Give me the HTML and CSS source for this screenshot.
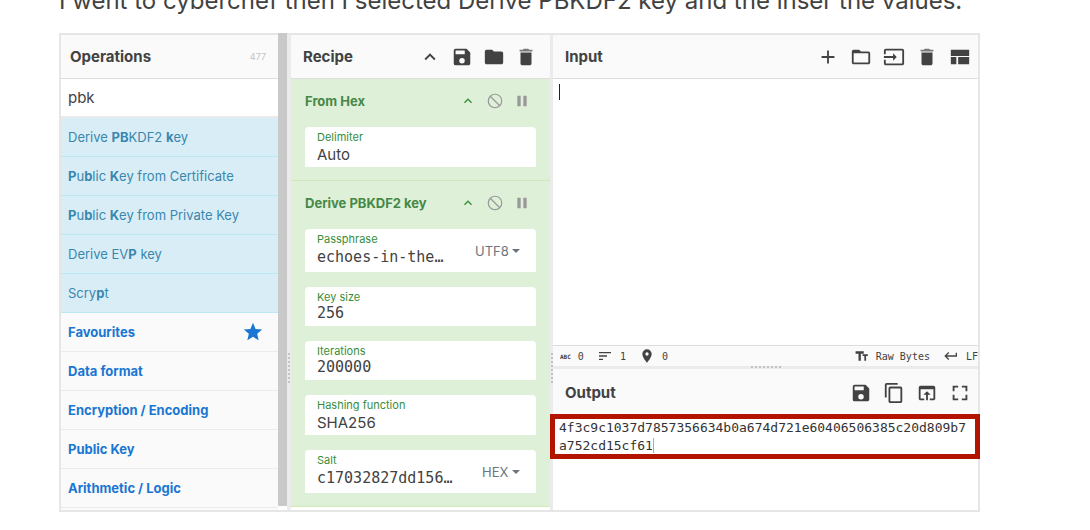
FILE: index.html
```
<!DOCTYPE html>
<html lang="en">
<head>
    <meta charset="utf-8">
    <title>CyberChef walkthrough</title>
    <link rel="stylesheet" href="styles.css">
</head>
<body>
    <p class="intro">I went to cyberchef then I selected Derive PBKDF2 key and the inser the values.</p>

    <main class="app">
        <!-- Operations -->
        <section class="operations">
            <div class="ops-body">
                <header class="title-bar">
                    <h2>Operations</h2>
                    <span class="count">477</span>
                </header>
                <input class="search" type="text" value="pbk" aria-label="Search operations">
                <ul class="results">
                    <li>Derive <b>PB</b>KDF2 <b>k</b>ey</li>
                    <li><b>P</b>u<b>b</b>lic <b>K</b>ey from Certificate</li>
                    <li><b>P</b>u<b>b</b>lic <b>K</b>ey from Private Key</li>
                    <li>Derive EV<b>P</b> key</li>
                    <li>Scry<b>p</b>t</li>
                </ul>
                <nav class="categories">
                    <a href="#favourites">Favourites
                        <svg width="22" height="22" viewBox="0 0 24 24"><path d="M12 17.27 18.18 21l-1.64-7.03L22 9.24l-7.19-.61L12 2 9.19 8.63 2 9.24l5.46 4.73L5.82 21z"/></svg>
                    </a>
                    <a href="#data">Data format</a>
                    <a href="#encryption">Encryption / Encoding</a>
                    <a href="#publickey">Public Key</a>
                    <a href="#arithmetic">Arithmetic / Logic</a>
                </nav>
            </div>
            <div class="scrollbar"></div>
        </section>

        <div class="gutter"><span class="grip"></span></div>

        <!-- Recipe -->
        <section class="recipe">
            <header class="title-bar">
                <h2>Recipe</h2>
                <div class="icons">
                    <button type="button" aria-label="Hide arguments"><svg class="icon" viewBox="0 0 24 24"><path d="M12 8l-6 6 1.41 1.41L12 10.83l4.59 4.58L18 14z"/></svg></button>
                    <button type="button" aria-label="Save recipe"><svg class="icon" viewBox="0 0 24 24"><path d="M17 3H5a2 2 0 0 0-2 2v14a2 2 0 0 0 2 2h14c1.100 0 2-.9 2-2V7zm-5 16a3 3 0 1 1 0-6 3 3 0 0 1 0 6zm3-10H5V5h10z"/></svg></button>
                    <button type="button" aria-label="Load recipe"><svg class="icon" viewBox="0 0 24 24"><path d="M10 4H4c-1.100 0-2 .9-2 2v12c0 1.100.9 2 2 2h16c1.100 0 2-.9 2-2V8c0-1.100-.9-2-2-2h-8z"/></svg></button>
                    <button type="button" aria-label="Clear recipe"><svg class="icon" viewBox="0 0 24 24"><path d="M6 19c0 1.100.9 2 2 2h8c1.100 0 2-.9 2-2V7H6z"/><path opacity=".7" d="M19 4h-3.500l-1-1h-5l-1 1H5v2h14z"/></svg></button>
                </div>
            </header>

            <article class="operation">
                <div class="op-title">
                    <h3>From Hex</h3>
                    <div class="op-icons">
                        <button type="button" class="collapse" aria-label="Collapse"><svg viewBox="0 0 24 24"><path d="M12 8l-6 6 1.41 1.41L12 10.83l4.59 4.58L18 14z"/></svg></button>
                        <button type="button" aria-label="Disable"><svg viewBox="0 0 24 24"><path d="M12 1a11 11 0 1 0 0 22 11 11 0 0 0 0-22zM3 12A9 9 0 0 1 5 6.300L17.700 19A9 9 0 0 1 3 12zm16 5.700L6.300 5A9 9 0 0 1 19 17.700z"/></svg></button>
                        <button type="button" aria-label="Breakpoint"><svg viewBox="0 0 24 24"><path d="M5 4h5v16H5zM14 4h5v16h-5z"/></svg></button>
                    </div>
                </div>
                <div class="field">
                    <div class="value">
                        <label for="delimiter">Delimiter</label>
                        <select id="delimiter"><option>Auto</option></select>
                    </div>
                </div>
            </article>

            <article class="operation">
                <div class="op-title">
                    <h3>Derive PBKDF2 key</h3>
                    <div class="op-icons">
                        <button type="button" class="collapse" aria-label="Collapse"><svg viewBox="0 0 24 24"><path d="M12 8l-6 6 1.41 1.41L12 10.83l4.59 4.58L18 14z"/></svg></button>
                        <button type="button" aria-label="Disable"><svg viewBox="0 0 24 24"><path d="M12 1a11 11 0 1 0 0 22 11 11 0 0 0 0-22zM3 12A9 9 0 0 1 5 6.300L17.700 19A9 9 0 0 1 3 12zm16 5.700L6.300 5A9 9 0 0 1 19 17.700z"/></svg></button>
                        <button type="button" aria-label="Breakpoint"><svg viewBox="0 0 24 24"><path d="M5 4h5v16H5zM14 4h5v16h-5z"/></svg></button>
                    </div>
                </div>
                <div class="field tall">
                    <div class="value">
                        <label for="passphrase">Passphrase</label>
                        <input id="passphrase" type="text" value="echoes-in-the…">
                    </div>
                    <div class="toggle">
                        <select aria-label="Passphrase format"><option>UTF8</option></select>
                        <svg width="8" height="4" viewBox="0 0 8 4"><path d="M0 0h8L4 4z"/></svg>
                    </div>
                </div>
                <div class="field short">
                    <div class="value">
                        <label for="keysize">Key size</label>
                        <input id="keysize" type="text" value="256">
                    </div>
                </div>
                <div class="field short">
                    <div class="value">
                        <label for="iterations">Iterations</label>
                        <input id="iterations" type="text" value="200000">
                    </div>
                </div>
                <div class="field">
                    <div class="value">
                        <label for="hash">Hashing function</label>
                        <select id="hash"><option>SHA256</option></select>
                    </div>
                </div>
                <div class="field tall">
                    <div class="value">
                        <label for="salt">Salt</label>
                        <input id="salt" type="text" value="c17032827dd156…">
                    </div>
                    <div class="toggle">
                        <select aria-label="Salt format"><option>HEX</option></select>
                        <svg width="8" height="4" viewBox="0 0 8 4"><path d="M0 0h8L4 4z"/></svg>
                    </div>
                </div>
            </article>
        </section>

        <div class="gutter"><span class="grip"></span></div>

        <!-- Input and output -->
        <section class="io">
            <header class="title-bar">
                <h2>Input</h2>
                <div class="icons">
                    <button type="button" aria-label="Add tab"><svg class="icon" viewBox="0 0 24 24"><path d="M19 13h-6v6h-2v-6H5v-2h6V5h2v6h6z"/></svg></button>
                    <button type="button" aria-label="Open folder"><svg class="icon" viewBox="0 0 24 24"><path d="M20 6h-8l-2-2H4c-1.100 0-2 .9-2 2v12c0 1.100.9 2 2 2h16c1.100 0 2-.9 2-2V8c0-1.100-.9-2-2-2zm0 12H4V8h16z"/></svg></button>
                    <button type="button" aria-label="Open file"><svg class="icon" viewBox="0 0 24 24"><path d="M21 3H3a2 2 0 0 0-2 2v4h2V5h18v14H3v-4H1v4c0 1.100.9 2 2 2h18c1.100 0 2-.9 2-2V5a2 2 0 0 0-2-2zM11 16l4-4-4-4v3H1v2h10z"/></svg></button>
                    <button type="button" aria-label="Clear input"><svg class="icon" viewBox="0 0 24 24"><path d="M6 19c0 1.100.9 2 2 2h8c1.100 0 2-.9 2-2V7H6z"/><path opacity=".7" d="M19 4h-3.500l-1-1h-5l-1 1H5v2h14z"/></svg></button>
                    <button type="button" aria-label="Reset layout"><svg class="icon" viewBox="0 0 24 24"><path d="M2 4h20v7H2zM2 12h6v8H2zM10 12h12v8H10z"/></svg></button>
                </div>
            </header>
            <div class="editor">
                <textarea aria-label="Input"></textarea>
                <span class="caret"></span>
            </div>
            <footer class="status">
                <span class="abc">ABC</span><span>0</span>
                <svg width="16" height="16" viewBox="0 0 24 24"><path d="M3 18h6v-2H3zM3 6v2h18V6zm0 7h12v-2H3z"/></svg><span>1</span>
                <svg width="16" height="16" viewBox="0 0 24 24"><path d="M12 2a7 7 0 0 0-7 7c0 5.250 7 13 7 13s7-7.750 7-13a7 7 0 0 0-7-7zm0 9.500a2.500 2.500 0 1 1 0-5 2.500 2.500 0 0 1 0 5z"/></svg><span>0</span>
                <div class="status-right">
                    <svg width="14" height="14" viewBox="0 0 24 24"><path d="M1 4v4h5v12h4V8h5V4zM22 9h-9v3h3v8h3v-8h3z"/></svg>
                    <span>Raw Bytes</span>
                    <svg width="16" height="16" viewBox="0 0 24 24"><path d="M19 7v4H5.830l3.580-3.590L8 6l-6 6 6 6 1.410-1.410L5.830 13H21V7z"/></svg>
                    <span>LF</span>
                </div>
            </footer>
            <div class="row-gutter"><span class="row-grip"></span></div>
            <header class="title-bar">
                <h2>Output</h2>
                <div class="icons">
                    <button type="button" aria-label="Save output"><svg class="icon" viewBox="0 0 24 24"><path d="M17 3H5a2 2 0 0 0-2 2v14a2 2 0 0 0 2 2h14c1.100 0 2-.9 2-2V7zm-5 16a3 3 0 1 1 0-6 3 3 0 0 1 0 6zm3-10H5V5h10z"/></svg></button>
                    <button type="button" aria-label="Copy output"><svg class="icon" viewBox="0 0 24 24"><path d="M16 1H4a2 2 0 0 0-2 2v14h2V3h12zm3 4H8a2 2 0 0 0-2 2v14c0 1.100.9 2 2 2h11c1.100 0 2-.9 2-2V7a2 2 0 0 0-2-2zm0 16H8V7h11z"/></svg></button>
                    <button type="button" aria-label="Move output to input"><svg class="icon" viewBox="0 0 24 24"><path d="M19 4H5a2 2 0 0 0-2 2v12c0 1.100.9 2 2 2h4v-2H5V8h14v10h-4v2h4c1.100 0 2-.9 2-2V6a2 2 0 0 0-2-2zm-7 6l-4 4h3v6h2v-6h3z"/></svg></button>
                    <button type="button" aria-label="Maximise output"><svg class="icon" viewBox="0 0 24 24"><path d="M6 14H4v6h6v-2H6zM4 10h2V6h4V4H4zm14 8h-4v2h6v-6h-2zM14 4v2h4v4h2V4z"/></svg></button>
                </div>
            </header>
            <div class="result">
                <output>4f3c9c1037d7857356634b0a674d721e60406506385c20d809b7a752cd15cf61<span class="end"></span></output>
                <div class="highlight"></div>
            </div>
        </section>
    </main>
</body>
</html>
```
FILE: styles.css
```
* {
    box-sizing: border-box;
}

body {
    margin: 0;
    background: #fff;
    color: #424242;
    font-family: Inter, "Liberation Sans", sans-serif;
    font-size: 13px;
}

h2, h3, ul {
    margin: 0;
    padding: 0;
}

.intro {
    margin: -14px 0 17px 59px;
    font-size: 24px;
    line-height: 30px;
    white-space: nowrap;
}

.app {
    display: grid;
    grid-template-columns: 226fr 4px 259fr 3px 425fr;
    margin: 0 110px 0 59px;
    border: 2px solid #e6e6e6;
}

.title-bar {
    display: flex;
    align-items: center;
    justify-content: space-between;
    height: 44px;
    padding: 0 13px 0 12px;
    background: #fafafa;
    border-bottom: 1px solid #ddd;
}

.title-bar h2 {
    font-size: 15px;
    font-weight: 700;
}

button {
    display: flex;
    padding: 0;
    border: 0;
    background: none;
    color: inherit;
}

svg {
    flex: none;
    fill: currentColor;
}

.icon {
    width: 22px;
    height: 22px;
}

.icons {
    display: flex;
    gap: 10px;
}

/* Operations */
.operations {
    display: flex;
}

.ops-body {
    flex: 1;
    background: #fafafa;
}

.ops-body .title-bar {
    padding: 0 12px 0 9px;
}

.count {
    color: #c4c4c4;
    font-size: 9px;
}

.search {
    display: block;
    width: 100%;
    height: 39px;
    padding: 0 7px;
    border: 0;
    border-bottom: 2px solid #eaeaea;
    background: #fff;
    color: #424242;
    font: 15px Inter, sans-serif;
}

.results {
    list-style: none;
}

.results li {
    height: 39px;
    padding: 0 7px;
    border-bottom: 1px solid #bce8f1;
    background: #d9edf7;
    color: #3a87ad;
    line-height: 38px;
}

.categories a {
    display: flex;
    align-items: center;
    justify-content: space-between;
    height: 39px;
    padding: 0 14px 0 7px;
    border-bottom: 1px solid #ebebeb;
    color: #1976d2;
    font-weight: 700;
    text-decoration: none;
}

.scrollbar {
    width: 9px;
    margin: -2px 0 4px;
    background: #c9c9c9;
}

.gutter {
    display: flex;
    justify-content: center;
    background: #ebebeb;
}

.grip {
    height: 30px;
    margin-top: 318px;
    border-left: 2px dotted #c4c4c4;
}

/* Recipe */
.recipe {
    padding-bottom: 3px;
}

.operation {
    padding: 0 14px 13px;
    border-bottom: 1px solid #d0e9b8;
    background: #dff0d8;
    color: #468847;
}

.op-title {
    display: flex;
    align-items: center;
    justify-content: space-between;
    height: 48px;
    padding: 0 6px 4px 0;
}

.op-title h3 {
    font-size: 13px;
    font-weight: 700;
}

.op-icons {
    display: flex;
    gap: 11px;
    color: #999;
}

.op-icons svg {
    width: 16px;
    height: 16px;
}

.op-icons .collapse {
    color: #388e3c;
}

.field {
    display: flex;
    justify-content: space-between;
    height: 40px;
    padding: 3px 12px 0;
    border-radius: 4px 4px 0 0;
    background: #fff;
}

.field + .field {
    margin-top: 15px;
}

.field.tall {
    height: 43px;
}

.field.short {
    height: 39px;
}

.value {
    display: flex;
    flex: 1;
    flex-direction: column;
    min-width: 0;
}

.value label {
    color: #388e3c;
    font-size: 11px;
    line-height: 14px;
}

.value input,
.value select {
    width: 100%;
    height: 18px;
    padding: 0;
    border: 0;
    background: none;
    color: #424242;
    font: 15px "DejaVu Sans Mono", monospace;
    appearance: none;
}

.value select {
    height: 20px;
    font-family: Inter, sans-serif;
}

.tall .value input {
    height: 22px;
}

.toggle {
    display: flex;
    align-items: center;
    gap: 3px;
    padding: 0 4px 3px 0;
    color: #6c757d;
}

.toggle select {
    padding: 0;
    border: 0;
    background: none;
    color: inherit;
    font: 13px Inter, sans-serif;
    appearance: none;
}

/* Input and output */
.io {
    display: flex;
    flex-direction: column;
    min-width: 0;
}

.io .title-bar {
    padding-right: 7px;
}

.io .icons {
    gap: 11px;
}

.editor {
    position: relative;
    height: 266px;
}

.editor textarea {
    display: block;
    width: 100%;
    height: 100%;
    padding: 5px 6px;
    border: 0;
    resize: none;
    font: 13px/18px "DejaVu Sans Mono", monospace;
}

.caret {
    position: absolute;
    top: 5px;
    left: 6px;
    width: 1px;
    height: 16px;
    background: #222;
}

.status {
    display: flex;
    align-items: center;
    gap: 7px;
    height: 21px;
    padding-left: 7px;
    border-top: 1px solid #ddd;
    background: #fafafa;
    font: 10px "DejaVu Sans Mono", monospace;
}

.status span + svg {
    margin-left: 6px;
}

.abc {
    font-size: 6px;
    font-weight: bold;
}

.status-right {
    display: flex;
    align-items: center;
    gap: 7px;
    margin-left: auto;
}

.row-gutter {
    display: flex;
    justify-content: center;
    height: 3px;
    background: #ebebeb;
}

.row-grip {
    width: 30px;
    border-top: 2px dotted #c4c4c4;
}

.row-gutter + .title-bar {
    height: 48px;
}

.result {
    position: relative;
    flex: 1;
    margin-top: 2px;
}

.result output {
    display: block;
    padding: 0 12px 0 6px;
    color: #333;
    font: 13px/18px "DejaVu Sans Mono", monospace;
    word-break: break-all;
}

.end {
    border-right: 1px solid #aaa;
}

.highlight {
    position: absolute;
    top: -5px;
    right: -2px;
    left: -3px;
    height: 45px;
    border: 5px solid #b31400;
}
```
